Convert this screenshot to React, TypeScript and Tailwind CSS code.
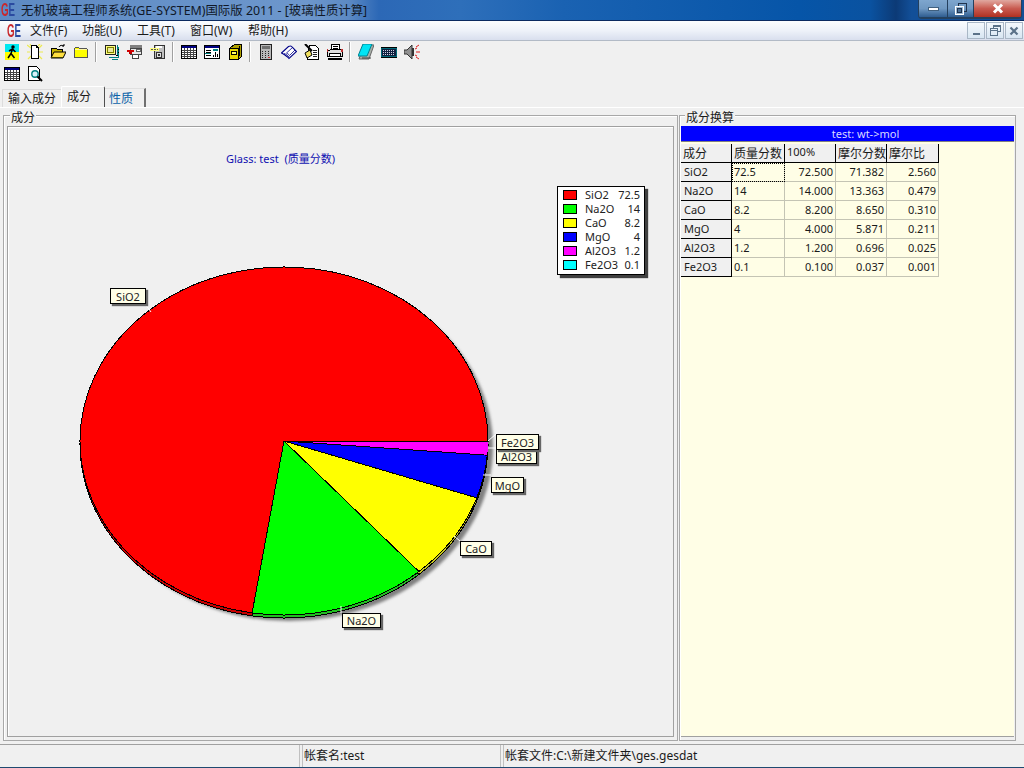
import React from "react";

const FONT = { fontFamily: '"Noto Sans","Noto Sans CJK SC",sans-serif' };

const cx = 285, cy = 441, rx = 204, ry = 174;
function pt(deg: number, dy = 0) {
  const r = (deg * Math.PI) / 180;
  return [cx + rx * Math.cos(r), cy + dy + ry * Math.sin(r)];
}
function slice(a: number, b: number, dy = 0) {
  const [x1, y1] = pt(a, dy);
  const [x2, y2] = pt(b, dy);
  const large = b - a > 180 ? 1 : 0;
  return `M${cx} ${cy + dy}L${x1.toFixed(2)} ${y1.toFixed(2)}A${rx} ${ry} 0 ${large} 1 ${x2.toFixed(2)} ${y2.toFixed(2)}Z`;
}
const slices = [
  { a: 0, b: 0.36, c: "#00ffff", d: "#00c8c8" },
  { a: 0.36, b: 4.68, c: "#ff00ff", d: "#c800c8" },
  { a: 4.68, b: 19.08, c: "#0000ff", d: "#0000c8" },
  { a: 19.08, b: 48.6, c: "#ffff00", d: "#c8c820" },
  { a: 48.6, b: 99, c: "#00ff00", d: "#20c020" },
  { a: 99, b: 360, c: "#ff0000", d: "#c80000" },
];

function Pie() {
  return (
    <svg className="absolute left-0 top-0" width="664" height="610" viewBox="9 127 664 610">
      <defs>
        <filter id="bl" x="-5%" y="-5%" width="110%" height="110%">
          <feGaussianBlur stdDeviation="1.6" />
        </filter>
      </defs>
      <ellipse cx={cx + 5} cy={cy + 6} rx={rx} ry={ry} fill="#808080" filter="url(#bl)" />
      <g shapeRendering="crispEdges">
        {slices.map((s, i) => (
          <path key={i} d={slice(s.a, s.b, 3)} fill={s.d} stroke="#000" strokeWidth="1" />
        ))}
        {slices.map((s, i) => (
          <path key={i} d={slice(s.a, s.b)} fill={s.c} stroke={i < 2 ? "none" : "#000"} strokeWidth="1" />
        ))}
        <path d={`M${cx} ${cy}H489`} stroke="#000" />
      </g>
      <g stroke="#fff" fill="none">
        <path d="M489 441L497 434" />
        <path d="M489 448H497" />
        <path d="M484 475H492" />
        <path d="M455 536L461 541" />
        <path d="M342 606V613" />
        <path d="M146 304L152 312" />
      </g>
    </svg>
  );
}

const legend: [string, string, string][] = [
  ["SiO2", "72.5", "bg-[#ff0000]"],
  ["Na2O", "14", "bg-[#00ff00]"],
  ["CaO", "8.2", "bg-[#ffff00]"],
  ["MgO", "4", "bg-[#0000ff]"],
  ["Al2O3", "1.2", "bg-[#ff00ff]"],
  ["Fe2O3", "0.1", "bg-[#00ffff]"],
];

function Label({ t, cls }: { t: string; cls: string }) {
  return (
    <div className={`absolute flex items-center justify-center border border-black bg-[#ffffe8] text-[11px] leading-none text-[#222] shadow-[2px_2px_1px_#666] ${cls}`}>
      {t}
    </div>
  );
}

function Ico({ children }: { children: React.ReactNode }) {
  return (
    <svg width="16" height="16" viewBox="0 0 16 16" className="block" shapeRendering="crispEdges">
      {children}
    </svg>
  );
}

const table = (
  <Ico>
    <rect x="0.5" y="1.5" width="15" height="13" fill="#fff" stroke="#000" />
    <rect x="1" y="2" width="14" height="2" fill="#000080" />
    <path d="M1 6.5H15M1 8.5H15M1 10.5H15M1 12.5H15M3.5 4V14M6.5 4V14M9.5 4V14M12.5 4V14" stroke="#444" />
  </Ico>
);

const icons: React.ReactNode[] = [
  <Ico>
    <rect x="1" y="0" width="14" height="8" fill="#00e8f0" />
    <rect x="1" y="8" width="14" height="8" fill="#ffff00" />
    <g shapeRendering="auto" stroke="#000" fill="none" strokeWidth="1.5">
      <circle cx="9" cy="3" r="1" fill="#000" />
      <path d="M8.5 5L7 9.5L10.5 14M7 9.5L4 14M5 7L8.5 5L11.5 8" />
    </g>
  </Ico>,
  <Ico>
    <g stroke="#ecea50" shapeRendering="auto" strokeWidth="1.2">
      <path d="M0 1L4 4M15 1L12 4M0 8H3M16 8H12M1 15L4 12M15 15L12 12M13 0L11 2M3 0L4 2" />
    </g>
    <path d="M4.5 1.5H9.5L11.5 3.5V14.5H4.5Z" fill="#fff" stroke="#000" />
    <path d="M9.5 1.5V3.5H11.5" fill="none" stroke="#000" />
  </Ico>,
  <Ico>
    <path d="M1.5 4.5H6.5L7.5 5.5H12.5V12.5H1.5Z" fill="#c8b400" stroke="#000" />
    <path d="M1 14L4 8H16L13 14Z" fill="#ffe040" stroke="#000" shapeRendering="auto" />
    <path d="M9 3C10 1 12 1 14 2M14 2V0M14 2H12" fill="none" stroke="#000" shapeRendering="auto" />
    <rect x="1" y="13" width="12" height="1" fill="#404000" />
  </Ico>,
  <Ico>
    <path d="M1.5 4.5L2.5 3.5H5.5L6.5 4.5H13.5L14.5 5.5V13.5H1.5Z" fill="#ffff00" stroke="#555" />
    <path d="M2 5.5H14" stroke="#fff8a0" />
  </Ico>,
  <Ico>
    <rect x="1.5" y="1.5" width="10" height="9" fill="#ffff80" stroke="#222" />
    <rect x="3.5" y="3.5" width="6" height="5" fill="#e8e8a0" stroke="#808000" />
    <path d="M13.5 1V11M14.5 3V13M5 13.5H15M8 15.5H14" stroke="#008080" />
    <path d="M14 5.5H15M14 8.5H15M12 11.5H14" stroke="#000" />
  </Ico>,
  <Ico>
    <rect x="3" y="1" width="12" height="3" fill="#808080" />
    <rect x="3.5" y="4.5" width="11" height="6" fill="#e8e8e8" stroke="#444" />
    <rect x="5.5" y="10.5" width="6" height="4" fill="#fff" stroke="#444" />
    <rect x="0" y="6" width="7" height="2" fill="#d00000" />
    <rect x="9.5" y="5.5" width="4" height="2" fill="#fff" stroke="#666" />
    <rect x="2" y="8" width="3" height="2" fill="#c00000" />
  </Ico>,
  <Ico>
    <rect x="4.5" y="1.5" width="10" height="13" fill="#c0c0c0" stroke="#333" />
    <rect x="6.5" y="8.5" width="5" height="5" fill="#e0e0e0" stroke="#333" />
    <rect x="8" y="10" width="2" height="2" fill="#333" />
    <rect x="0" y="4" width="9" height="3" fill="#ffff80" />
    <path d="M1 5.5H8" stroke="#555" strokeDasharray="2 1" />
    <rect x="6" y="2" width="6" height="2" fill="#fff" />
  </Ico>,
  table,
  <Ico>
    <rect x="0.5" y="1.5" width="15" height="13" fill="#fff" stroke="#000" />
    <rect x="1" y="2" width="14" height="2" fill="#000080" />
    <path d="M2 6.5H7M2 8.5H7M2 11.5H7M9.5 11V13M11.5 8V13M13.5 10V13" stroke="#000" />
    <rect x="9" y="5" width="5" height="2" fill="#008080" />
    <rect x="1" y="9" width="6" height="1" fill="#008080" />
  </Ico>,
  <Ico>
    <path d="M3.5 3.5L7.5 0.5H14.5V12.5L11.5 15.5H3.5Z" fill="#b0a000" stroke="#000" />
    <rect x="2.5" y="4.5" width="9" height="11" fill="#e8d800" stroke="#000" />
    <rect x="4.5" y="7.5" width="5" height="3" fill="#ffff60" stroke="#000" />
    <rect x="12" y="2" width="1" height="10" fill="#000" />
  </Ico>,
  <Ico>
    <rect x="2.5" y="0.5" width="11" height="15" fill="#b8b8b8" stroke="#222" />
    <rect x="4" y="2" width="8" height="3" fill="#707070" />
    <path d="M4 7.5H5M7 7.5H8M10 7.5H11M4 9.5H5M7 9.5H8M10 9.5H11M4 11.5H5M7 11.5H8M10 11.5H11M4 13.5H5M7 13.5H8" stroke="#222" />
    <rect x="10" y="13" width="2" height="1" fill="#d03030" />
  </Ico>,
  <Ico>
    <g shapeRendering="auto">
      <path d="M0.5 9L7.5 2.5C9.5 1.5 11 2.5 11.5 3.5L15.5 7.5L8 14.5C6.5 12.5 3 10.5 0.5 9Z" fill="#fff" stroke="#000088" strokeWidth="1.1" />
      <path d="M3 9.5C5 10 7 11.5 8 13M11.5 3.5L5.5 9C6.5 9.5 7.5 10 8.5 11.5L14 6" stroke="#000088" fill="none" strokeWidth=".8" />
    </g>
  </Ico>,
  <Ico>
    <path d="M5.5 1.5H11.5L14.5 4.5V15.5H3.5V8.5Z" fill="#fff" stroke="#000" />
    <path d="M9 6.5H13M9 8.5H13M9 10.5H13M9 12.5H13" stroke="#222" />
    <path d="M1 0L8 7" stroke="#000" strokeWidth="2" shapeRendering="auto" />
    <path d="M1 9L6 6L8 11L3 14Z" fill="#f0e060" stroke="#000" shapeRendering="auto" />
  </Ico>,
  <Ico>
    <rect x="4.5" y="0.5" width="8" height="6" fill="#fff" stroke="#000" />
    <path d="M0.5 7.5L3.5 5.5H13.5L15.5 7.5V12.5H0.5Z" fill="#e0e0e0" stroke="#000" />
    <rect x="2.5" y="9.5" width="11" height="3" fill="#fff" stroke="#000" />
    <path d="M1 14.5H15" stroke="#000" strokeWidth="2" />
    <path d="M6 2.5H11M6 4.5H11" stroke="#000" />
    <rect x="14" y="5" width="2" height="3" fill="#c03030" />
    <rect x="0" y="5" width="1" height="3" fill="#c03030" />
  </Ico>,
  <Ico>
    <g shapeRendering="auto">
      <path d="M6 1H16L11 15H1Z" fill="#a8b0a8" stroke="#666" />
      <path d="M5 0H14L9 12H0Z" fill="#00e4f4" stroke="#008090" />
      <path d="M4 14H13" stroke="#444" />
    </g>
  </Ico>,
  <Ico>
    <rect x="0" y="3" width="16" height="11" fill="#006878" />
    <rect x="1" y="5" width="14" height="7" fill="#102040" />
    <path d="M2 6.5H14M2 8.5H14M2 10.5H14" stroke="#d0d0e0" strokeDasharray="1 1" />
    <rect x="0" y="3" width="16" height="1" fill="#000" />
    <rect x="0" y="13" width="16" height="1" fill="#000" />
  </Ico>,
  <Ico>
    <path d="M0 6H3L8 1V15L3 10H0Z" fill="#909090" stroke="#333" shapeRendering="auto" />
    <rect x="8" y="4" width="2" height="8" fill="#333" />
    <path d="M12 3L15 1M12 8H16M12 13L15 15M11 5L13 4M11 11L13 12" stroke="#e02020" shapeRendering="auto" />
  </Ico>,
  table,
  <Ico>
    <path d="M1.5 0.5H9.5L12.5 3.5V14.5H1.5Z" fill="#fff" stroke="#000" />
    <g shapeRendering="auto">
      <circle cx="8" cy="8" r="3.2" fill="#d8f0f8" stroke="#008080" strokeWidth="1.4" />
      <path d="M10.5 10.5L15 15" stroke="#000" strokeWidth="2" />
    </g>
  </Ico>,
];

function Btn({ i }: { i: number }) {
  return <div className="flex h-[22px] w-[23px] items-center justify-center">{icons[i]}</div>;
}
function Sep() {
  return (
    <div className="flex h-[22px] w-[8px] items-center pl-[3px]">
      <div className="h-[20px] w-[2px] border-r border-white bg-[#a0a0a0]" />
    </div>
  );
}

const rows = [
  ["SiO2", "72.5", "72.500", "71.382", "2.560"],
  ["Na2O", "14", "14.000", "13.363", "0.479"],
  ["CaO", "8.2", "8.200", "8.650", "0.310"],
  ["MgO", "4", "4.000", "5.871", "0.211"],
  ["Al2O3", "1.2", "1.200", "0.696", "0.025"],
  ["Fe2O3", "0.1", "0.100", "0.037", "0.001"],
];
const heads = ["成分", "质量分数", "100%", "摩尔分数", "摩尔比"];

function WinBtn({ cls, children }: { cls: string; children: React.ReactNode }) {
  return <div className={`flex h-[18px] items-center justify-center border-b border-r border-[#24405e] ${cls}`}>{children}</div>;
}
function MdiBtn({ children }: { children: React.ReactNode }) {
  return (
    <div className="flex h-[17px] w-[18px] items-center justify-center border border-[#a9b7c6] bg-gradient-to-b from-[#f4f8fc] to-[#d8e6f2]">
      {children}
    </div>
  );
}
function Logo() {
  return (
    <div className="flex h-[20px] origin-left scale-x-[.54] items-center whitespace-nowrap font-['Liberation_Sans'] text-[18px] font-bold leading-[20px]">
      <span className="text-[#c8282c]">G</span>
      <span className="text-[#2a4aa0]">E</span>
    </div>
  );
}

export default function App() {
  return (
    <div style={FONT} className="flex h-[768px] w-[1024px] flex-col overflow-hidden bg-[#f0f0f0] text-[12px] text-[#1a1a1a]">
      {/* title bar */}
      <div className="flex h-[21px] shrink-0 items-start border-b border-[#0a2a60] bg-[linear-gradient(90deg,#5d8ac4_0%,#6d97cc_30%,#5d8ac4_34%,#2c68b6_37%,#2e6fba_45%,#1a62b2_55%,#0655a8_78%,#0a52a0_85%,#0c3a76_87.5%,#124f98_89%)] pl-[1px]">
        <div className="w-[20px]">
          <Logo />
        </div>
        <div className="pt-[2px] text-[12.4px] leading-[17px] text-[#101828]">无机玻璃工程师系统(GE-SYSTEM)国际版 2011 - [玻璃性质计算]</div>
        <div className="ml-auto mr-[2px] flex overflow-hidden rounded-b-[4px] border-x border-b border-[#24405e]">
          <WinBtn cls="w-[29px] bg-gradient-to-b from-[#7ea6ce] via-[#6f98c2] to-[#2f5d90]">
            <div className="h-[4px] w-[11px] border border-[#40607f] bg-white" />
          </WinBtn>
          <WinBtn cls="w-[26px] bg-gradient-to-b from-[#7ea6ce] via-[#6f98c2] to-[#2f5d90]">
            <svg width="12" height="12" viewBox="0 0 12 12" shapeRendering="crispEdges">
              <rect x="3.5" y="0.5" width="8" height="8" fill="none" stroke="#20344e" />
              <rect x="0.5" y="3.5" width="8" height="8" fill="#9ab8d4" stroke="#fff" />
              <rect x="2.5" y="5.5" width="4" height="4" fill="#4a7098" stroke="#20344e" />
            </svg>
          </WinBtn>
          <div className="flex h-[18px] w-[47px] items-center justify-center border-b border-[#24405e] bg-gradient-to-b from-[#e0a8a0] via-[#c85a50] to-[#b03020]">
            <svg width="12" height="11" viewBox="0 0 12 11">
              <path d="M2 1.5L10 9.5M10 1.5L2 9.5" stroke="#fff" strokeWidth="3" />
            </svg>
          </div>
        </div>
      </div>

      {/* menu bar */}
      <div className="flex h-[20px] shrink-0 items-center border-b border-[#b2bac6] bg-gradient-to-b from-[#fbfdfe] via-[#eef2f9] to-[#d9dfee]">
        <div className="w-[30px] pl-[7px]">
          <Logo />
        </div>
        <div className="w-[52px]">文件(F)</div>
        <div className="w-[55px]">功能(U)</div>
        <div className="w-[53px]">工具(T)</div>
        <div className="w-[58px]">窗口(W)</div>
        <div>帮助(H)</div>
        <div className="ml-auto mr-[1px] flex gap-[1px]">
          <MdiBtn>
            <div className="mt-[6px] h-[2px] w-[7px] bg-[#5b7288]" />
          </MdiBtn>
          <MdiBtn>
            <svg width="11" height="11" viewBox="0 0 11 11" shapeRendering="crispEdges">
              <path d="M3.5 3V0.5H10.5V6.5H8M0.5 3.5H7.5V10.5H0.5ZM0.5 5H7.5M3.5 1.5H10.5" fill="none" stroke="#5b7288" />
            </svg>
          </MdiBtn>
          <MdiBtn>
            <svg width="10" height="10" viewBox="0 0 10 10">
              <path d="M1.5 1.5L8.5 8.5M8.5 1.5L1.5 8.5" stroke="#5b7288" strokeWidth="2.2" />
            </svg>
          </MdiBtn>
        </div>
      </div>

      {/* toolbars */}
      <div className="flex shrink-0">
        <Btn i={0} />
        <Btn i={1} />
        <Btn i={2} />
        <Btn i={3} />
        <Sep />
        <Btn i={4} />
        <Btn i={5} />
        <Btn i={6} />
        <Sep />
        <Btn i={7} />
        <Btn i={8} />
        <Btn i={9} />
        <Sep />
        <Btn i={10} />
        <Btn i={11} />
        <Btn i={12} />
        <Btn i={13} />
        <Sep />
        <Btn i={14} />
        <Btn i={15} />
        <Btn i={16} />
      </div>
      <div className="flex shrink-0">
        <Btn i={17} />
        <Btn i={18} />
      </div>

      {/* tabs */}
      <div className="flex h-[22px] shrink-0 items-end pl-[2px]">
        <div className="flex h-[18px] w-[59px] items-center justify-center border-l border-t border-[#dcdcdc] bg-[#f0f0f0] text-[12px]">输入成分</div>
        <div className="flex h-[21px] w-[44px] items-center rounded-t-[2px] border-x border-t border-white border-r-[#505050] bg-[#f0f0f0] pl-[5px]">成分</div>
        <div className="flex h-[19px] w-[41px] items-center border-t border-r-2 border-t-[#e0e0e0] border-r-[#707070] pl-[4px] pt-[1px] text-[#0a63a8]">性质</div>
      </div>

      {/* body */}
      <div className="flex min-h-0 flex-1 gap-[1px] border-t border-white pl-[3px] pt-[7px]">
        <div className="relative h-[626px] w-[675px] shrink-0 border border-[#a8a8a8] px-[3px] pb-[3px] pt-[10px] shadow-[inset_1px_1px_0_#fff]">
          <span className="absolute left-[6px] top-[-5px] bg-[#f0f0f0] px-[1px] leading-[14px]">成分</span>
          <div className="relative h-full w-full overflow-hidden border border-[#a0a0a0] bg-[#f0f0f0] shadow-[inset_1px_1px_0_#fff]">
            <Pie />
            <div className="absolute left-[218px] top-[25px] flex items-center text-[11px] leading-[14px] text-[#1010b0]">
              Glass: test&nbsp;&nbsp;(质量分数)
            </div>
            <div className="absolute left-[549px] top-[59px] flex h-[89px] w-[88px] flex-col border border-black bg-white px-[5px] pt-[1px] text-[11px] leading-[14px] text-[#222] shadow-[3px_3px_1px_#404040]">
              {legend.map(([n, v, c]) => (
                <div key={n} className="flex h-[14px] items-center">
                  <div className={`h-[10px] w-[14px] border border-black ${c}`} />
                  <span className="ml-[8px]">{n}</span>
                  <span className="ml-auto mr-[-1px]">{v}</span>
                </div>
              ))}
            </div>
            <Label t="SiO2" cls="left-[102px] top-[161px] h-[16px] w-[36px]" />
            <Label t="Al2O3" cls="left-[488px] top-[321px] h-[16px] w-[41px]" />
            <Label t="Fe2O3" cls="left-[488px] top-[307px] h-[16px] w-[43px]" />
            <Label t="MgO" cls="left-[483px] top-[350px] h-[16px] w-[33px]" />
            <Label t="CaO" cls="left-[452px] top-[414px] h-[15px] w-[32px]" />
            <Label t="Na2O" cls="left-[334px] top-[486px] h-[15px] w-[39px]" />
          </div>
        </div>

        <div className="relative h-[626px] w-[337px] shrink-0 border border-[#a8a8a8] px-[1px] pb-[3px] pt-[10px] shadow-[inset_1px_1px_0_#fff]">
          <span className="absolute left-[5px] top-[-5px] bg-[#f0f0f0] px-[1px] leading-[14px]">成分换算</span>
          <div className="flex h-full flex-col border-b border-[#a0a0a0] bg-[#fffee6]">
            <div className="flex h-[15px] items-center justify-center bg-[#0000ff] pl-[36px] text-[11px] leading-none text-[#d8d8ff]">test: wt-&gt;mol</div>
            <div className="h-[3px] border-t border-[#808080]" />
            <div className="grid w-[258px] grid-cols-[51px_53px_51px_51px_52px] auto-rows-[19px] text-[11px] leading-none">
              {heads.map((h, i) => (
                <div key={h} className={`flex items-center border-b border-r border-black bg-[#f0f0f0] pl-[2px] ${i === 2 ? "pb-[3px] text-[11px]" : "pt-[1px] text-[12px]"}`}>
                  {h}
                </div>
              ))}
              {rows.map((r) =>
                r.map((v, j) =>
                  j === 0 ? (
                    <div key={j} className="flex items-center border-b border-r border-black bg-[#f0f0f0] pb-[2px] pl-[3px]">
                      {v}
                    </div>
                  ) : j === 1 ? (
                    <div key={j} className={`flex items-center border-b border-r border-[#c4c4b4] pb-[2px] pl-[2px] ${r[0] === "SiO2" ? "outline-1 -outline-offset-1 outline-dotted outline-black" : ""}`}>
                      {v}
                    </div>
                  ) : (
                    <div key={j} className="flex items-center justify-end border-b border-r border-[#c4c4b4] pb-[2px] pr-[2px]">
                      {v}
                    </div>
                  ),
                ),
              )}
            </div>
          </div>
        </div>
      </div>

      {/* status bar */}
      <div className="flex h-[23px] shrink-0 gap-[2px] border-t border-[#a0a0a0]">
        <div className="h-full w-[300px] border-r border-[#c0c0c0]" />
        <div className="flex h-full w-[199px] items-center border-x border-[#c0c0c0] pl-[1px]">帐套名:test</div>
        <div className="flex h-full flex-1 items-center border-l border-[#c0c0c0] pl-[1px]">帐套文件:C:\新建文件夹\ges.gesdat</div>
      </div>
      <div className="h-[1px] shrink-0 bg-[#1f4a70]" />
    </div>
  );
}
